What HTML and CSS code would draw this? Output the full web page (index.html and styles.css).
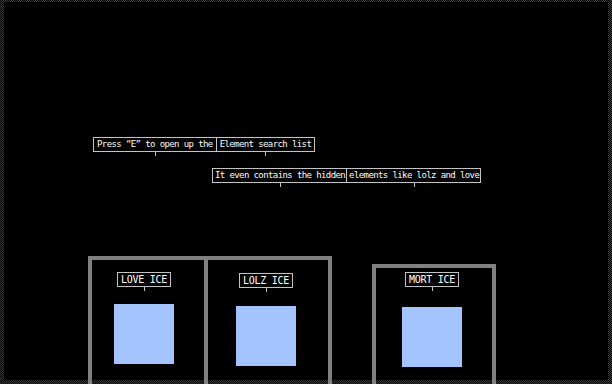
FILE: index.html
```html
<!DOCTYPE html>
<html lang="en">
<head>
  <meta charset="UTF-8">
  <title>Ice Lab</title>
  <link rel="stylesheet" href="styles.css">
</head>
<body>
  <main class="stage">
    <div class="field"></div>

    <div class="hint hint-search">
      <span class="cell">Press “E” to open up the</span>
      <span class="cell">Element search list</span>
    </div>

    <div class="hint hint-hidden">
      <span class="cell">It even contains the hidden</span>
      <span class="cell">elements like lolz and love</span>
    </div>

    <div class="pens">
      <div class="pen pen-love">
        <div class="tag">LOVE ICE</div>
        <div class="ice"></div>
      </div>
      <div class="pen pen-lolz">
        <div class="tag">LOLZ ICE</div>
        <div class="ice"></div>
      </div>
    </div>

    <div class="pen pen-mort">
      <div class="tag">MORT ICE</div>
      <div class="ice"></div>
    </div>
  </main>
</body>
</html>
```

FILE: styles.css
```css
body {
  margin: 0;
  background: #000;
  font-family: 'DejaVu Sans Mono', monospace;
  color: #fff;
}

.stage {
  position: relative;
  width: 612px;
  height: 384px;
  overflow: hidden;
  background: repeating-conic-gradient(#3c3c3c 0 25%, #000 0 50%) 0 0 / 2px 2px;
}

.field {
  position: absolute;
  top: 2px;
  left: 4px;
  right: 4px;
  bottom: 4px;
  background: #000;
}

/* hint bubbles */
.hint {
  position: absolute;
  display: flex;
}

.hint-search {
  left: 93px;
  top: 137px;
}

.hint-hidden {
  left: 212px;
  top: 168px;
}

.cell,
.tag {
  position: relative;
  display: block;
  height: 13px;
  padding: 0 2px;
  border: 1px solid #c4c4c4;
  font-size: 9px;
  line-height: 13px;
  letter-spacing: -0.6px;
  white-space: nowrap;
}

.hint-search .cell {
  padding: 0 3px;
}

.hint-hidden .cell {
  padding: 0 1px 0 2px;
}

.cell + .cell {
  margin-left: -1px;
}

.cell::after,
.tag::after {
  content: '';
  position: absolute;
  left: 50%;
  top: 100%;
  width: 1px;
  height: 4px;
  margin-top: 1px;
  background: #c4c4c4;
}

/* ice pens */
.pens {
  position: absolute;
  left: 88px;
  top: 256px;
  display: flex;
}

.pen {
  display: flex;
  flex-direction: column;
  align-items: center;
  border: 4px solid #808080;
  box-sizing: border-box;
}

.pen-love {
  width: 120px;
  height: 132px;
  padding: 12px 8px 0 0;
  --drop: 17px;
}

.pen-lolz {
  width: 128px;
  height: 132px;
  margin-left: -4px;
  padding: 13px 4px 0 0;
  --drop: 18px;
}

.pen-mort {
  position: absolute;
  left: 372px;
  top: 264px;
  width: 124px;
  height: 124px;
  padding: 4px 4px 0 0;
  --drop: 20px;
}

.tag {
  font-size: 10px;
  letter-spacing: -0.3px;
  padding: 0 3px;
}

.ice {
  width: 60px;
  height: 60px;
  margin-top: var(--drop);
  background: #a4c4ff;
}
```
